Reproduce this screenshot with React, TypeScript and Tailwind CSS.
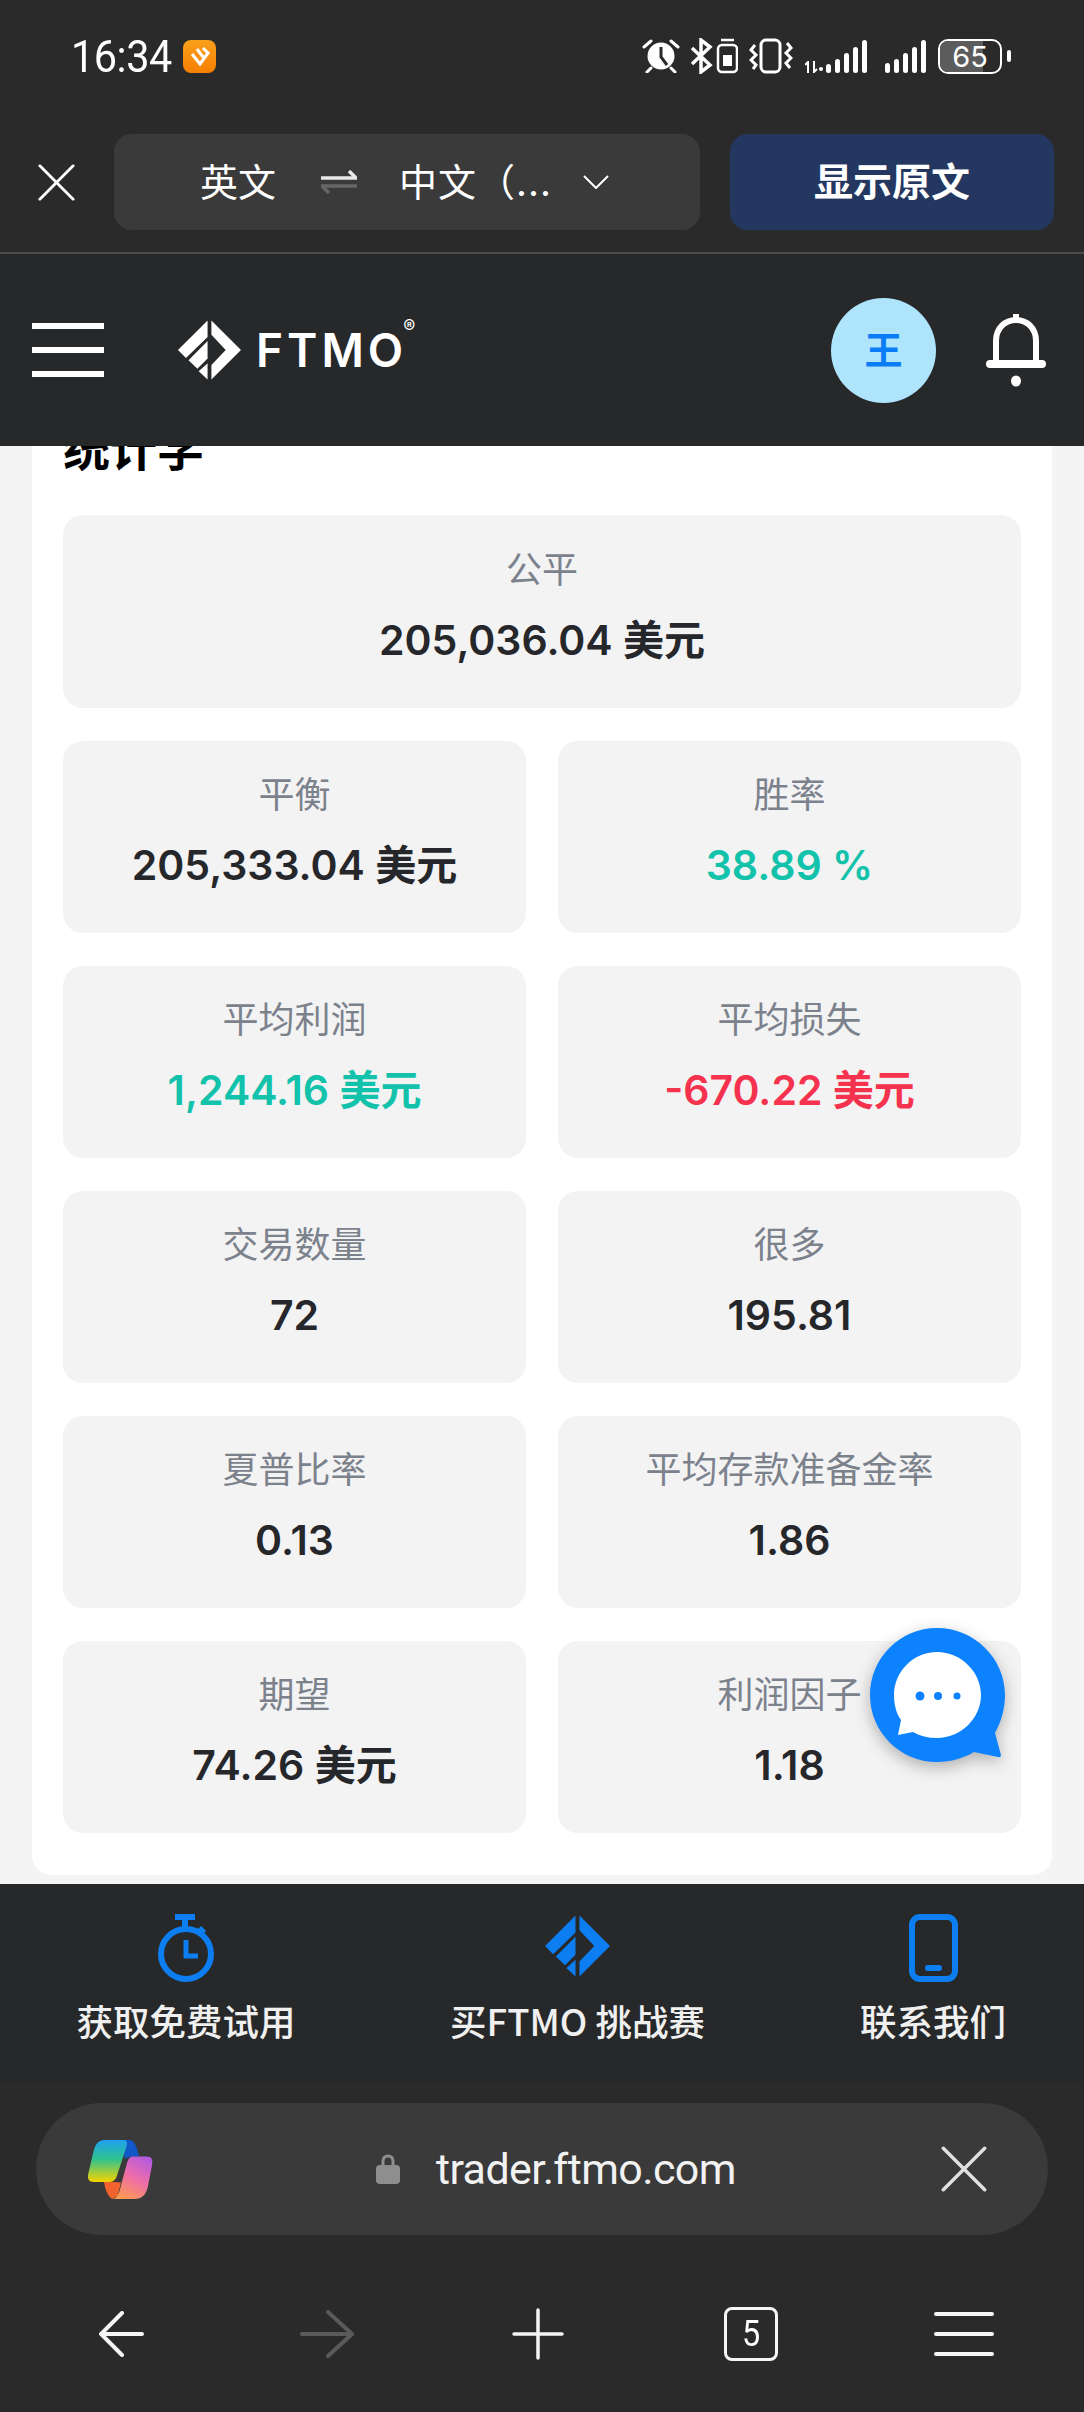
interface Stat {
  label: string;
  value: string;
  tone?: string;
}

const STATS: Stat[] = [
  { label: "平衡", value: "205,333.04 美元" },
  { label: "胜率", value: "38.89 %", tone: "text-[#12c2aa]" },
  { label: "平均利润", value: "1,244.16 美元", tone: "text-[#12c2aa]" },
  { label: "平均损失", value: "-670.22 美元", tone: "text-[#f5334f]" },
  { label: "交易数量", value: "72" },
  { label: "很多", value: "195.81" },
  { label: "夏普比率", value: "0.13" },
  { label: "平均存款准备金率", value: "1.86" },
  { label: "期望", value: "74.26 美元" },
  { label: "利润因子", value: "1.18" },
];

function StatCard({ label, value, tone = "text-[#25272a]" }: Stat) {
  return (
    <div className="flex h-[192px] flex-col items-center rounded-[20px] bg-[#f3f3f4] pt-[31px]">
      <div className="text-[36px] leading-[46px] text-[#7c828c]">{label}</div>
      <div className={`mt-[24px] text-[41px] leading-[46px] font-semibold ${tone}`}>{value}</div>
    </div>
  );
}

function FtmoMark({ className }: { className: string }) {
  return (
    <svg viewBox="47 30 198 186" className={className} fill="currentColor">
      <path d="M152 30 245 123 152 216V170L197 123 152 75Z" />
      <path d="M140 30V82L72 148 47 123Z" />
      <path d="M140 95V150L108 182 80 155Z" />
      <path d="M140 165V216L112 190Z" />
    </svg>
  );
}

function CloseIcon({ className }: { className: string }) {
  return (
    <svg viewBox="0 0 40 40" className={className} fill="none" stroke="currentColor" strokeWidth="3" strokeLinecap="round">
      <path d="M2 2 38 38M38 2 2 38" />
    </svg>
  );
}

function Bars({ heights }: { heights: number[] }) {
  return (
    <div className="flex h-[33px] items-end gap-[4px]">
      {heights.map((h, i) => (
        <div key={i} className="w-[5px] rounded-full bg-white" style={{ height: h }} />
      ))}
    </div>
  );
}

function StatusBar() {
  return (
    <div className="flex h-[134px] items-center pb-[22px] pl-[71px] pr-[73px] text-white">
      <span className="w-[104px] origin-left scale-x-[0.92] font-['Roboto',sans-serif] text-[45px] leading-none tracking-[-0.5px]">16:34</span>
      <div className="ml-[8px] flex h-[33px] w-[33px] items-center justify-center rounded-[8px] bg-gradient-to-b from-[#f9a01b] to-[#f67e00]">
        <svg viewBox="0 0 24 24" className="h-[24px] w-[24px]" fill="none" stroke="#fff" strokeWidth="3">
          <path d="M4 10 12 20 20 9M9 5 15 13M15 4 21 10" />
        </svg>
      </div>
      <div className="ml-auto flex items-center">
        {/* alarm */}
        <svg viewBox="0 0 38 34" className="h-[34px] w-[38px]">
          <circle cx="19" cy="17" r="13.5" fill="#fff" />
          <path d="M19 8V18L25 26" fill="none" stroke="#2a2a2a" strokeWidth="3" />
          <path d="M2 8 9 2M36 8 29 2M5 33 9 29M33 33 29 29" stroke="#fff" strokeWidth="3" strokeLinecap="round" />
        </svg>
        {/* bluetooth + battery */}
        <svg viewBox="0 0 48 36" className="ml-[10px] h-[36px] w-[48px]" fill="none" stroke="#fff" strokeWidth="3.5">
          <path d="M2 10 20 27 11 34V2L20 9 2 26" />
          <rect x="28" y="7" width="19" height="27" rx="4" strokeWidth="2.5" />
          <path d="M31 2H44" strokeWidth="2.5" />
          <rect x="33" y="17" width="9" height="11" fill="#fff" stroke="none" />
        </svg>
        {/* vibrate */}
        <svg viewBox="0 0 44 36" className="ml-[11px] h-[36px] w-[44px]" fill="none" stroke="#fff" strokeWidth="3">
          <rect x="12" y="2" width="19" height="32" rx="5" strokeWidth="3" />
          <path d="M6 7 2 12 7 17 2 22 7 27 4 31M38 5 42 10 37 15 42 20 37 25 41 30" />
        </svg>
        <div className="ml-[12px] flex items-end gap-[3px]">
          <svg viewBox="0 0 18 12" className="h-[12px] w-[18px]" fill="none" stroke="#fff" strokeWidth="2">
            <path d="M3 12V1L0 4M9 0V11L12 8" />
            <circle cx="16" cy="8" r="2" fill="#fff" stroke="none" />
          </svg>
          <Bars heights={[9, 14, 20, 26, 33]} />
        </div>
        <div className="ml-[18px]">
          <Bars heights={[10, 14, 20, 26, 33]} />
        </div>
        <div className="relative ml-[12px] flex h-[35px] w-[64px] items-center justify-center overflow-hidden rounded-[10px] border-[2.5px] border-white font-['Inter',sans-serif] text-[29px] leading-none">
          <div className="absolute inset-y-0 left-0 w-[72%] bg-[#5c5c5c]" />
          <span className="relative">65</span>
        </div>
        <div className="ml-[5px] h-[12px] w-[4px] rounded-full bg-white" />
      </div>
    </div>
  );
}

function TranslateBar() {
  return (
    <div className="flex h-[120px] items-start border-b-2 border-[#4a4b4c] pl-[38px] pr-[30px] pb-[16px]">
      <div className="flex h-[96px] items-center">
        <CloseIcon className="h-[37px] w-[37px] text-white" />
      </div>
      <div className="ml-[39px] flex h-[96px] w-[586px] items-center rounded-[18px] bg-[#3a3a3a] pl-[86px] text-[38px] text-white">
        <span>英文</span>
        <svg viewBox="0 0 36 24" className="ml-[45px] h-[24px] w-[36px]" fill="none" strokeWidth="3.5">
          <path d="M0 8H35L28 1" stroke="#e8e8e8" />
          <path d="M36 16H1L8 23" stroke="#666" />
        </svg>
        <span className="ml-[42px] tracking-[1px]">中文（...</span>
        <svg viewBox="0 0 26 14" className="ml-[31px] h-[14px] w-[26px]" fill="none" stroke="#fff" strokeWidth="2">
          <path d="M1 1 13 13 25 1" />
        </svg>
      </div>
      <div className="ml-[30px] flex h-[96px] w-[324px] items-center justify-center rounded-[18px] bg-[#243760] text-[39px] font-semibold text-white">
        显示原文
      </div>
    </div>
  );
}

function SiteHeader() {
  return (
    <header className="flex h-[192px] items-center bg-[#27282a] pl-[32px] pr-[37px] text-white">
      <div className="flex h-[54px] w-[72px] flex-col justify-between">
        <div className="h-[6px] bg-white" />
        <div className="h-[6px] bg-white" />
        <div className="h-[6px] bg-white" />
      </div>
      <FtmoMark className="ml-[74px] h-[60px] w-[63px] text-white" />
      <div className="relative ml-[15px] font-['Inter',sans-serif] text-[46px] leading-none font-semibold tracking-[4px]">
        FTMO
        <span className="absolute -top-[9px] -right-[8px] text-[18px] font-normal tracking-normal">®</span>
      </div>
      <div className="ml-auto flex h-[105px] w-[105px] items-center justify-center rounded-full bg-[#aee5fd] text-[38px] font-semibold text-[#0a7cf5]">
        王
      </div>
      <svg viewBox="0 0 62 74" className="ml-[49px] h-[74px] w-[62px]" fill="none" stroke="#fff">
        <path d="M31 1V7" strokeWidth="6" />
        <path d="M11 50V28C11 15 20 7 31 7S51 15 51 28V50" strokeWidth="6" />
        <rect x="1" y="47" width="60" height="8" rx="4" fill="#fff" stroke="none" />
        <ellipse cx="31" cy="68" rx="5" ry="5.5" fill="#fff" stroke="none" />
      </svg>
    </header>
  );
}

function ChatBubble() {
  return (
    <svg viewBox="0 0 137 134" className="absolute top-[1182px] right-[77px] h-[134px] w-[137px] drop-shadow-[0_5px_8px_rgba(0,0,0,0.28)]">
      <path d="M67 0C104 0 135 30 135 67 135 81 131 94 125 105L131 127Q131 130 128 129L104 124C94 130 81 134 67 134 30 134 0 104 0 67S30 0 67 0Z" fill="#0c82fe" />
      <path d="M67 24C91 24 111 44 111 67S91 110 67 110C58 110 50 108 43 104L28 107 31 92C26 85 24 76 24 67 24 44 43 24 67 24Z" fill="#fff" />
      <circle cx="50" cy="68" r="4.5" fill="#0c82fe" />
      <circle cx="68" cy="68" r="4" fill="#0c82fe" />
      <circle cx="87" cy="68" r="3.5" fill="#0c82fe" />
    </svg>
  );
}

function StatsPanel() {
  return (
    <section className="relative h-[1438px] shrink-0 overflow-hidden bg-[#f4f4f4] px-[32px]">
      <div className="-mt-[26px] rounded-b-[20px] bg-white px-[31px] pb-[42px]">
        <h2 className="h-[95px] text-[47px] leading-[58px] font-bold text-black">统计学</h2>
        <div className="flex h-[193px] flex-col items-center rounded-[20px] bg-[#f3f3f4] pt-[32px]">
          <div className="text-[36px] leading-[46px] text-[#7c828c]">公平</div>
          <div className="mt-[24px] text-[41px] leading-[46px] font-semibold text-[#25272a]">205,036.04 美元</div>
        </div>
        <div className="mt-[33px] grid grid-cols-2 gap-x-[32px] gap-y-[33px]">
          {STATS.map((s) => (
            <StatCard key={s.label} {...s} />
          ))}
        </div>
      </div>
      <ChatBubble />
    </section>
  );
}

function PromoBar() {
  return (
    <div className="flex h-[198px] shrink-0 justify-between bg-[#27282a] pr-[79px] pl-[78px] pt-[30px] font-['Noto_Sans_CJK_SC',sans-serif] text-[36.5px] leading-[48px] font-medium whitespace-nowrap text-[#f0f0f0]">
      <div className="flex w-[216px] flex-col items-center">
        <svg viewBox="0 0 56 68" className="h-[68px] w-[56px] shrink-0" fill="none" stroke="#0c7ef2" strokeWidth="6">
          <path d="M17 3H37M27 3V14M41 14 46 19" />
          <circle cx="28" cy="40" r="25" />
          <path d="M28 26V42H40" strokeWidth="5" />
        </svg>
        <span className="mt-[15px]">获取免费试用</span>
      </div>
      <div className="flex w-[255px] flex-col items-center">
        <FtmoMark className="h-[64px] w-[65px] shrink-0 text-[#0c7ef2]" />
        <span className="mt-[19px]">买FTMO 挑战赛</span>
      </div>
      <div className="flex w-[144px] flex-col items-center">
        <svg viewBox="0 0 49 68" className="h-[68px] w-[49px] shrink-0" fill="none" stroke="#0c7ef2" strokeWidth="6">
          <rect x="3" y="3" width="43" height="62" rx="8" />
          <path d="M19 54H30" strokeLinecap="round" />
        </svg>
        <span className="mt-[15px]">联系我们</span>
      </div>
    </div>
  );
}

function CopilotLogo() {
  return (
    <svg viewBox="48 40 202 184" className="h-[61px] w-[66px]">
      <defs>
        <linearGradient id="cpLeft" x1="0" y1="0" x2="0" y2="1">
          <stop offset="0" stopColor="#1fa2ef" />
          <stop offset="0.45" stopColor="#2fc28f" />
          <stop offset="1" stopColor="#f5d400" />
        </linearGradient>
        <linearGradient id="cpRight" x1="0.8" y1="0" x2="0.3" y2="1">
          <stop offset="0" stopColor="#b45be0" />
          <stop offset="0.5" stopColor="#ee6da8" />
          <stop offset="1" stopColor="#fb9a52" />
        </linearGradient>
      </defs>
      <path d="M150 42H178C192 42 200 60 207 92H180L165 100Z" fill="#1358c9" />
      <path d="M100 170H132L152 172 142 212 125 222C112 214 104 195 100 170Z" fill="#f0622e" />
      <path d="M102 42H160C172 42 172 52 168 64L140 150C136 164 128 170 112 170H68C54 170 48 160 52 144L68 76C74 54 84 42 102 42Z" fill="url(#cpLeft)" />
      <path d="M190 92H232C246 92 250 102 247 118L234 186C229 208 216 222 194 222H125C136 222 144 210 148 196L170 114C174 100 178 92 190 92Z" fill="url(#cpRight)" />
    </svg>
  );
}

function BrowserChrome() {
  return (
    <div className="flex-1 bg-[#2a2a2a] px-[36px] pt-[21px]">
      <div className="flex h-[132px] items-center rounded-[66px] bg-[#3a3a3a] pl-[51px] pr-[61px] text-white">
        <CopilotLogo />
        <svg viewBox="0 0 24 30" className="ml-[223px] h-[30px] w-[24px]">
          <path d="M7 12V7C7 4 9 2 12 2S17 4 17 7V12" fill="none" stroke="#8e8e8e" strokeWidth="3" />
          <rect x="0" y="11" width="24" height="19" rx="4" fill="#8e8e8e" />
        </svg>
        <span className="ml-[36px] font-['Roboto',sans-serif] text-[43px] leading-none tracking-[-0.6px] text-[#f2f2f2]">trader.ftmo.com</span>
        <CloseIcon className="ml-auto h-[46px] w-[46px] text-[#e0e0e0]" />
      </div>
      <nav className="mt-[72px] flex items-center justify-between pl-[63px] pr-[54px] text-white">
        <svg viewBox="0 0 45 46" className="h-[46px] w-[45px]" fill="none" stroke="#f5f5f5" strokeWidth="4" strokeLinecap="round">
          <path d="M23 2 2 23 23 44M2 23H43" />
        </svg>
        <svg viewBox="0 0 54 48" className="h-[48px] w-[54px]" fill="none" stroke="#5a5a5a" strokeWidth="4" strokeLinecap="round">
          <path d="M28 2 52 24 28 46M2 24H50" />
        </svg>
        <svg viewBox="0 0 52 52" className="ml-[2px] h-[52px] w-[52px]" fill="none" stroke="#f5f5f5" strokeWidth="3.5" strokeLinecap="round">
          <path d="M26 2V50M2 26H50" />
        </svg>
        <div className="ml-[4px] flex h-[54px] w-[54px] items-center justify-center rounded-[8px] border-[3.5px] border-[#f5f5f5] font-['Roboto',sans-serif] text-[36px] leading-none">
          <span className="scale-x-[0.9]">5</span>
        </div>
        <div className="flex h-[44px] w-[60px] flex-col justify-between">
          <div className="h-[4px] rounded-full bg-[#f5f5f5]" />
          <div className="h-[4px] rounded-full bg-[#f5f5f5]" />
          <div className="h-[4px] rounded-full bg-[#f5f5f5]" />
        </div>
      </nav>
    </div>
  );
}

export default function App() {
  return (
    <div className="flex h-[2412px] w-[1084px] flex-col overflow-hidden bg-[#2a2a2a] font-['Inter','Noto_Sans_CJK_SC',sans-serif]">
      <StatusBar />
      <TranslateBar />
      <SiteHeader />
      <StatsPanel />
      <PromoBar />
      <BrowserChrome />
    </div>
  );
}
